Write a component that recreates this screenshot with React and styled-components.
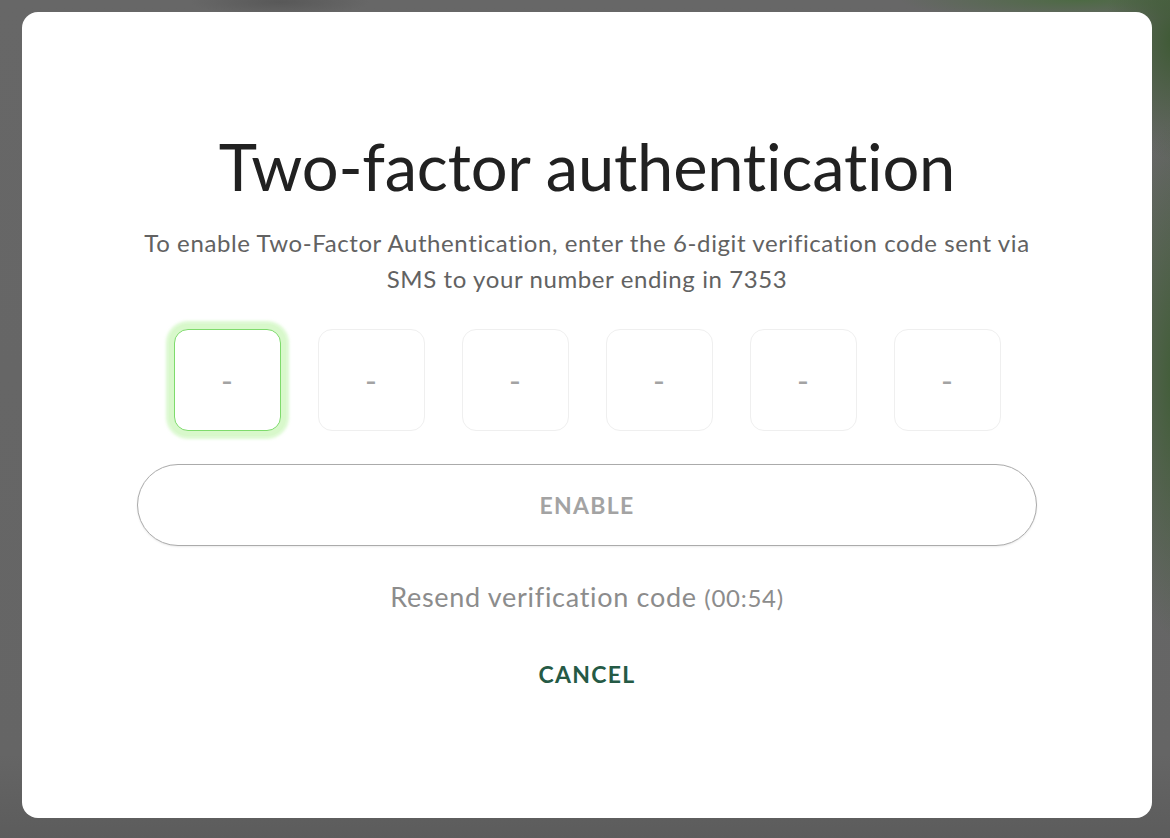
import React from 'react';
import styled, { createGlobalStyle } from 'styled-components';

const CODE_LENGTH = 6;

function App() {
  const [digits, setDigits] = React.useState(Array(CODE_LENGTH).fill(''));
  const [focused, setFocused] = React.useState(0);
  const [seconds, setSeconds] = React.useState(54);

  const timer = `00:${String(seconds).padStart(2, '0')}`;
  const complete = digits.every((d) => d !== '');

  return (
    <>
      <GlobalStyle />
      <Backdrop>
        <Modal>
          <Title>Two-factor authentication</Title>
          <Subtitle>
            To enable Two-Factor Authentication, enter the 6-digit verification code sent via
            <br />
            SMS to your number ending in 7353
          </Subtitle>

          <CodeRow>
            {digits.map((digit, i) => (
              <CodeBox
                key={i}
                value={digit}
                placeholder="-"
                maxLength={1}
                inputMode="numeric"
                $active={focused === i}
                onFocus={() => setFocused(i)}
                onChange={(event) => {
                  const next = [...digits];
                  next[i] = event.target.value.replace(/\D/g, '');
                  setDigits(next);
                }}
              />
            ))}
          </CodeRow>

          <EnableButton disabled={!complete}>ENABLE</EnableButton>

          <Resend onClick={() => setSeconds(59)}>
            Resend verification code <Timer>({timer})</Timer>
          </Resend>

          <CancelButton>CANCEL</CancelButton>
        </Modal>
      </Backdrop>
    </>
  );
}

// styles

const GlobalStyle = createGlobalStyle`
  html, body {
    margin: 0;
    height: 100%;
  }
  body {
    font-family: Lato, "Noto Sans", sans-serif;
    background: #666;
  }
  * {
    box-sizing: border-box;
  }
`;

const Backdrop = styled.div`
  height: 100vh;
  padding: 12px 18px 20px 22px;
  background:
    radial-gradient(ellipse 70px 120px at 1175px 40px, #3e5a34 0%, rgba(62, 90, 52, 0) 100%),
    radial-gradient(ellipse 60px 260px at 1178px 380px, #3f5d35 0%, rgba(63, 93, 53, 0) 100%),
    radial-gradient(ellipse 180px 20px at 1080px 0px, #4d6a44 0%, rgba(77, 106, 68, 0) 100%),
    radial-gradient(ellipse 90px 14px at 280px 2px, #585858 0%, rgba(88, 88, 88, 0) 100%),
    linear-gradient(to bottom, #676767 0%, #656565 90%, #5c5c5c 100%);
`;

const Modal = styled.div`
  height: 100%;
  background: #fff;
  border-radius: 16px;
  display: flex;
  flex-direction: column;
  align-items: center;
  padding-top: 122px;
`;

const Title = styled.h1`
  margin: 0;
  font-size: 65px;
  line-height: 1;
  font-weight: 400;
  color: #212121;
  letter-spacing: -0.2px;
`;

const Subtitle = styled.p`
  margin: 26px 0 0;
  font-size: 24px;
  line-height: 36px;
  letter-spacing: 0.6px;
  color: #626262;
  text-align: center;
`;

const CodeRow = styled.div`
  margin-top: 32px;
  display: flex;
  gap: 37px;
`;

const CodeBox = styled.input`
  width: 107px;
  height: 102px;
  border-radius: 14px;
  border: 1px solid ${({ $active }) => ($active ? '#7edb6c' : '#efefef')};
  box-shadow: ${({ $active }) =>
    $active ? '0 0 0 5px #d8f8cb, 0 0 3px 8px rgba(196, 245, 178, 0.6)' : 'none'};
  background: #fff;
  outline: none;
  text-align: center;
  font-family: inherit;
  font-size: 32px;
  color: #333;

  &::placeholder {
    color: #a3a3a3;
  }
`;

const EnableButton = styled.button`
  margin-top: 33px;
  width: 900px;
  height: 82px;
  border-radius: 41px;
  border: 1px solid #ababab;
  background: #fff;
  box-shadow: 0 1px 2px rgba(0, 0, 0, 0.08);
  font-family: inherit;
  font-size: 23px;
  font-weight: 700;
  letter-spacing: 1.3px;
  color: ${({ disabled }) => (disabled ? '#a3a3a3' : '#255a45')};
  cursor: ${({ disabled }) => (disabled ? 'default' : 'pointer')};
`;

const Resend = styled.div`
  margin-top: 35px;
  font-size: 27px;
  line-height: 1.2;
  letter-spacing: 0.7px;
  color: #8c8c8c;
  cursor: pointer;
`;

const Timer = styled.span`
  font-size: 24px;
`;

const CancelButton = styled.button`
  margin-top: 48px;
  padding: 0;
  border: none;
  background: none;
  font-family: inherit;
  font-size: 23px;
  line-height: 1.2;
  font-weight: 700;
  letter-spacing: 1.3px;
  color: #255a45;
  cursor: pointer;
`;

export default App;
